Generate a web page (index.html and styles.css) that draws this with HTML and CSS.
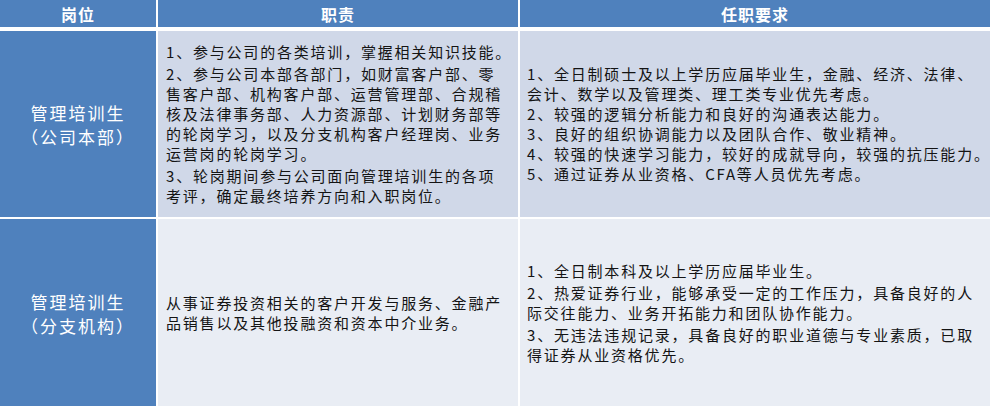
FILE: index.html
```html
<!DOCTYPE html>
<html lang="zh-CN">
<head>
<meta charset="utf-8">
<link rel="stylesheet" href="styles.css">
</head>
<body>
<div class="table">
  <div class="th">岗位</div>
  <div class="th">职责</div>
  <div class="th">任职要求</div>

  <div class="pos">管理培训生<br>（公司本部）</div>
  <div class="cell odd">
    <div class="txt">
      <p>1、参与公司的各类培训，掌握相关知识技能。</p>
      <p>2、参与公司本部各部门，如财富客户部、零<br>售客户部、机构客户部、运营管理部、合规稽<br>核及法律事务部、人力资源部、计划财务部等<br>的轮岗学习，以及分支机构客户经理岗、业务<br>运营岗的轮岗学习。</p>
      <p>3、轮岗期间参与公司面向管理培训生的各项<br>考评，确定最终培养方向和入职岗位。</p>
    </div>
  </div>
  <div class="cell odd right">
    <div class="txt tight">
      <p>1、全日制硕士及以上学历应届毕业生，金融、经济、法律、<br>会计、数学以及管理类、理工类专业优先考虑。</p>
      <p>2、较强的逻辑分析能力和良好的沟通表达能力。</p>
      <p>3、良好的组织协调能力以及团队合作、敬业精神。</p>
      <p>4、较强的快速学习能力，较好的成就导向，较强的抗压能力。</p>
      <p>5、通过证券从业资格、CFA等人员优先考虑。</p>
    </div>
  </div>

  <div class="pos">管理培训生<br>（分支机构）</div>
  <div class="cell even">
    <div class="txt">
      <p>从事证券投资相关的客户开发与服务、金融产<br>品销售以及其他投融资和资本中介业务。</p>
    </div>
  </div>
  <div class="cell even right">
    <div class="txt">
      <p>1、全日制本科及以上学历应届毕业生。</p>
      <p>2、热爱证券行业，能够承受一定的工作压力，具备良好的人<br>际交往能力、业务开拓能力和团队协作能力。</p>
      <p>3、无违法违规记录，具备良好的职业道德与专业素质，已取<br>得证券从业资格优先。</p>
    </div>
  </div>
</div>
</body>
</html>
```
FILE: styles.css
```css
html, body {
  margin: 0;
  padding: 0;
  background: #ffffff;
}
body {
  width: 990px;
  height: 408px;
  overflow: hidden;
  font-family: "Noto Sans CJK SC", "Noto Sans", sans-serif;
}
.table {
  display: grid;
  grid-template-columns: 156px 360px 470px;
  grid-template-rows: 29px 186px 187px;
  column-gap: 2px;
  row-gap: 2px;
  background: #ffffff;
}
.th {
  background: #4f81bd;
  color: #ffffff;
  font-weight: 700;
  font-size: 16px;
  letter-spacing: 1px;
  display: flex;
  align-items: center;
  justify-content: center;
  margin-bottom: 2px;
  line-height: 1;
}
.pos {
  background: #4f81bd;
  color: #ffffff;
  font-size: 17px;
  letter-spacing: 2px;
  line-height: 24px;
  display: flex;
  align-items: center;
  justify-content: center;
  text-align: center;
  padding-top: 2px;
}
.cell {
  display: flex;
  align-items: center;
  padding-left: 8px;
  overflow: hidden;
  color: #141414;
  font-size: 15px;
  letter-spacing: 1.8px;
  line-height: 20px;
}
.cell.right {
  padding-left: 7px;
}
.odd { background: #d0d8e8; }
.even { background: #e9edf4; }
.txt {
  white-space: nowrap;
}
.txt p {
  margin: 0 0 2px 0;
}
.txt p:last-child {
  margin-bottom: 0;
}
.txt.tight p {
  margin: 0;
}
```
